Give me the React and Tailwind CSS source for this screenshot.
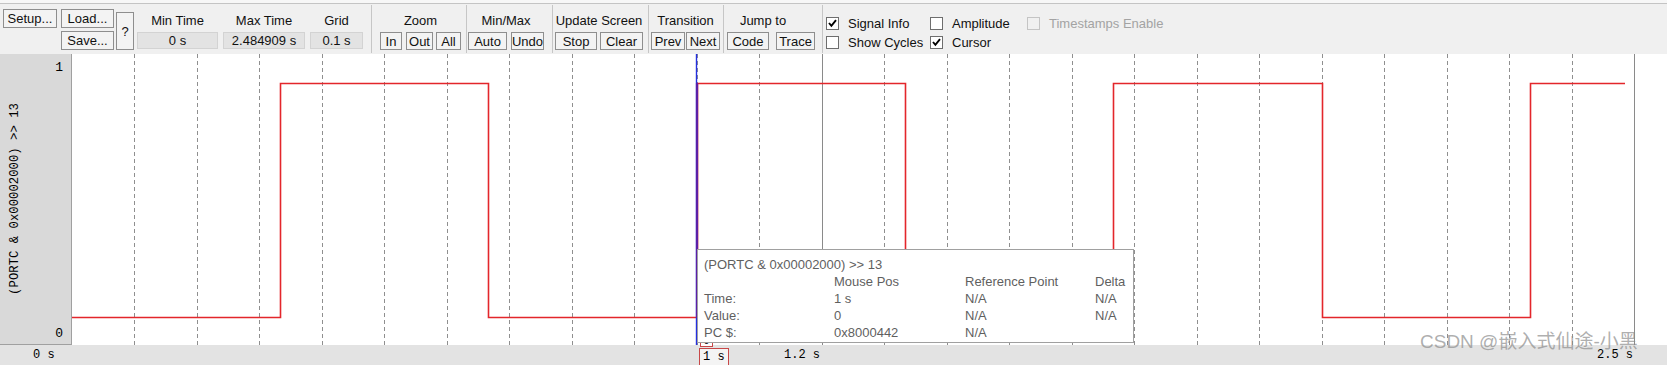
import React from "react";

const SANS = "font-['Liberation_Sans',Arial,sans-serif]";
const MONO = "font-['Liberation_Mono','DejaVu_Sans_Mono',monospace]";

function Btn({ className, children }) {
  return (
    <div
      className={`flex items-center justify-center border border-[#8e8e8e] bg-[#f3f3f3] text-[13px] leading-none text-[#111] ${className}`}
    >
      {children}
    </div>
  );
}

function ValBox({ className, children }) {
  return <div className={`flex flex-col ${className}`}>{children}</div>;
}

function Sep({ className }) {
  return <div className={`w-px h-[48px] mt-[1px] bg-[#c6c6c6] ${className}`} />;
}

function Check({ checked, disabled }) {
  return (
    <div
      className={`w-[13px] h-[13px] border flex items-center justify-center ${
        disabled ? "border-[#c4c4c4] bg-[#f0f0f0]" : "border-[#6e6e6e] bg-white"
      }`}
    >
      {checked && (
        <svg width="9" height="9" viewBox="0 0 9 9">
          <path d="M1 4 L3.4 6.8 L8 1.2" stroke="#000" strokeWidth="1.9" fill="none" />
        </svg>
      )}
    </div>
  );
}

function Plot() {
  const W = 1595;
  const H = 291;
  const ks = Array.from({ length: 25 }, (_, i) => i + 1);
  const pts =
    "0,263.5 208.5,263.5 208.5,29.5 416.5,29.5 416.5,263.5 625.5,263.5 625.5,29.5 833.5,29.5 833.5,263.5 1041.5,263.5 1041.5,29.5 1250.5,29.5 1250.5,263.5 1458.5,263.5 1458.5,29.5 1553,29.5";
  return (
    <svg width={W} height={H} className="block bg-white">
      {ks.map((k) => {
        const x = Math.floor(62.5 * k) + 0.5;
        const solid = k === 12 || k === 25;
        return (
          <line
            key={k}
            x1={x}
            y1={0}
            x2={x}
            y2={H}
            stroke={solid ? "#8a8a8a" : "#8f8f8f"}
            strokeWidth={1}
            strokeDasharray={solid ? undefined : "4 3"}
          />
        );
      })}
      <polyline points={pts} fill="none" stroke="#e3262b" strokeWidth="1.6" />
      <line x1="624.5" y1="0" x2="624.5" y2={H} stroke="#2430e0" strokeWidth="1.4" />
      <line x1="625" y1="29" x2="625" y2="264" stroke="#5b1fa6" strokeWidth="2.2" />
    </svg>
  );
}

export default function App() {
  return (
    <div className={`relative w-[1667px] h-[365px] overflow-hidden bg-[#f0f0f0] ${SANS}`}>
      {/* Toolbar */}
      <div className="h-[54px] flex flex-col bg-[#f0f0f0]">
        <div className="h-[3px] bg-[#f7f7f7]" />
        <div className="h-px bg-[#c4c4c4]" />
        <div className="h-[50px] flex items-start text-[13px] text-[#111]">
          <div className="ml-[3px] mt-[5px] flex items-start">
            <Btn className="w-[54px] h-[19px]">Setup...</Btn>
            <div className="ml-[4px] flex flex-col gap-[3px]">
              <Btn className="w-[53px] h-[19px]">Load...</Btn>
              <Btn className="w-[53px] h-[19px]">Save...</Btn>
            </div>
            <Btn className="ml-[2px] mt-[3px] w-[18px] h-[38px]">?</Btn>
          </div>

          <ValBox className="ml-[3px] mt-[6px] w-[81px]">
            <div className="h-[22px] flex items-center justify-center">Min Time</div>
            <div className="h-[17px] flex items-center justify-center bg-[#e3e3e3] border border-[#d3d3d3]">0 s</div>
          </ValBox>
          <ValBox className="ml-[5px] mt-[6px] w-[82px]">
            <div className="h-[22px] flex items-center justify-center">Max Time</div>
            <div className="h-[17px] flex items-center justify-center bg-[#e3e3e3] border border-[#d3d3d3]">2.484909 s</div>
          </ValBox>
          <ValBox className="ml-[5px] mt-[6px] w-[53px]">
            <div className="h-[22px] flex items-center justify-center">Grid</div>
            <div className="h-[17px] flex items-center justify-center bg-[#e3e3e3] border border-[#d3d3d3]">0.1 s</div>
          </ValBox>

          <Sep className="ml-[8px]" />

          <div className="ml-[8px] mt-[6px] flex flex-col">
            <div className="h-[22px] flex items-center justify-center">Zoom</div>
            <div className="flex">
              <Btn className="w-[22px] h-[18px]">In</Btn>
              <Btn className="ml-[4px] w-[27px] h-[18px]">Out</Btn>
              <Btn className="ml-[3px] w-[25px] h-[18px]">All</Btn>
            </div>
          </div>

          <Sep className="ml-[5px]" />

          <div className="ml-[1px] mt-[6px] flex flex-col">
            <div className="h-[22px] flex items-center justify-center">Min/Max</div>
            <div className="flex">
              <Btn className="w-[39px] h-[18px]">Auto</Btn>
              <Btn className="ml-[4px] w-[33px] h-[18px]">Undo</Btn>
            </div>
          </div>

          <Sep className="ml-[8px]" />

          <div className="ml-[2px] mt-[6px] flex flex-col">
            <div className="h-[22px] flex items-center justify-center whitespace-nowrap">Update Screen</div>
            <div className="flex">
              <Btn className="w-[42px] h-[18px]">Stop</Btn>
              <Btn className="ml-[3px] w-[43px] h-[18px]">Clear</Btn>
            </div>
          </div>

          <Sep className="ml-[5px]" />

          <div className="ml-[2px] mt-[6px] flex flex-col">
            <div className="h-[22px] flex items-center justify-center">Transition</div>
            <div className="flex">
              <Btn className="w-[34px] h-[18px]">Prev</Btn>
              <Btn className="ml-[1px] w-[34px] h-[18px]">Next</Btn>
            </div>
          </div>

          <Sep className="ml-[3px]" />

          <div className="ml-[3px] mt-[6px] flex flex-col">
            <div className="h-[22px] flex items-center justify-center pr-[16px]">Jump to</div>
            <div className="flex">
              <Btn className="w-[42px] h-[18px]">Code</Btn>
              <Btn className="ml-[7px] w-[39px] h-[18px]">Trace</Btn>
            </div>
          </div>

          <Sep className="ml-[7px]" />

          <div className="ml-[3px] pt-[10px] flex flex-col">
            <div className="h-[19px] flex items-center">
              <div className="w-[104px] flex items-center">
                <Check checked />
                <span className="ml-[9px]">Signal Info</span>
              </div>
              <div className="w-[97px] flex items-center">
                <Check />
                <span className="ml-[9px]">Amplitude</span>
              </div>
              <div className="flex items-center">
                <Check disabled />
                <span className="ml-[9px] text-[13px] text-[#a3a3a3] whitespace-nowrap">Timestamps Enable</span>
              </div>
            </div>
            <div className="h-[19px] flex items-center">
              <div className="w-[104px] flex items-center">
                <Check />
                <span className="ml-[9px] whitespace-nowrap">Show Cycles</span>
              </div>
              <div className="w-[97px] flex items-center">
                <Check checked />
                <span className="ml-[9px]">Cursor</span>
              </div>
            </div>
          </div>
        </div>
      </div>

      {/* Plot row */}
      <div className="h-[291px] flex">
        <div className="w-[72px] h-full bg-[#d9d9d9] border-r border-b border-[#a0a0a0] flex">
          <div className="w-[30px] flex items-center justify-center">
            <span className={`${MONO} text-[12.3px] leading-none text-black whitespace-nowrap [writing-mode:vertical-rl] rotate-180`}>
              {"(PORTC & 0x00002000) >> 13"}
            </span>
          </div>
          <div className={`flex-1 flex flex-col justify-between items-end pr-[8px] pt-[6px] pb-[3px] ${MONO} text-[13px] leading-[15px] text-black`}>
            <span>1</span>
            <span>0</span>
          </div>
        </div>
        <Plot />
      </div>

      {/* Time axis */}
      <div className={`relative h-[20px] bg-[#e3e3e3] ${MONO} text-[12px] leading-[14px] text-black`}>
        <span className="absolute left-[33px] top-[3px]">0 s</span>
        <span className="absolute left-[784px] top-[3px]">1.2 s</span>
        <span className="absolute left-[1597px] top-[3px]">2.5 s</span>
        <div className="absolute left-[699px] top-[3px] w-[30px] h-[18px] border border-[#c84848] bg-[#f4f4f4] flex items-start pl-[3px] pt-[1px]">
          1 s
        </div>
      </div>

      {/* cursor value box (mostly hidden under tooltip) */}
      <div className={`absolute left-[700px] top-[337px] w-[13px] h-[10px] border border-[#c84848] bg-white ${MONO} text-[10px] leading-[8px] flex justify-center overflow-hidden`}>
        0
      </div>

      {/* Tooltip */}
      <div className="absolute left-[697px] top-[249px] z-10 w-[437px] h-[94px] bg-white border border-[#a0a0a0] pl-[6px] pt-[6px] text-[13px] leading-[17px] text-[#5f5f5f]">
        <div>{"(PORTC & 0x00002000) >> 13"}</div>
        <div className="grid grid-cols-[130px_131px_130px_1fr]">
          <div />
          <div>Mouse Pos</div>
          <div>Reference Point</div>
          <div>Delta</div>
          <div>Time:</div>
          <div>1 s</div>
          <div>N/A</div>
          <div>N/A</div>
          <div>Value:</div>
          <div>0</div>
          <div>N/A</div>
          <div>N/A</div>
          <div>PC $:</div>
          <div>0x8000442</div>
          <div>N/A</div>
          <div />
        </div>
      </div>

      {/* Watermark */}
      <div className="absolute left-[1420px] top-[330px] z-20 whitespace-nowrap text-[19px] leading-[23px] text-[rgba(140,140,140,0.7)] font-['Liberation_Sans','Noto_Sans_CJK_SC',sans-serif]">
        CSDN @嵌入式仙途-小黑
      </div>
    </div>
  );
}
